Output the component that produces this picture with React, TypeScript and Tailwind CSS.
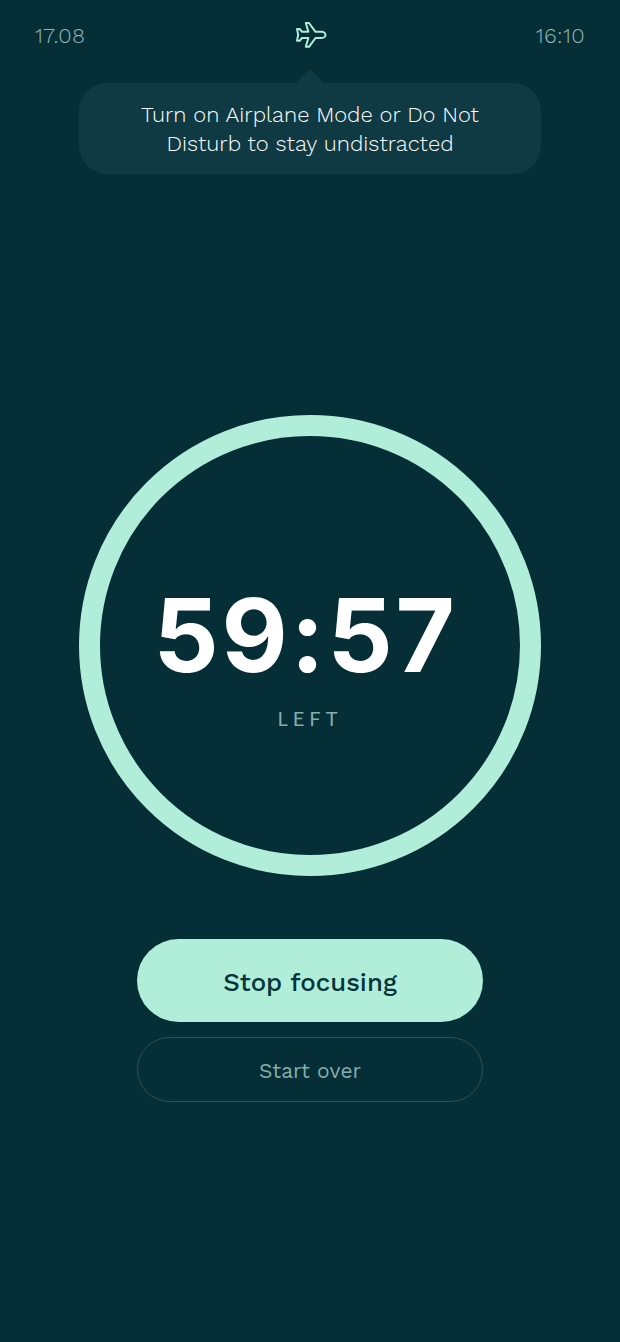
import React from 'react';

function PlaneIcon() {
  return (
    <svg className="ml-[1px]" width="32" height="28" viewBox="0 0 32 28" fill="none" stroke="#b0eeda" strokeWidth="2" strokeLinejoin="round" strokeLinecap="round">
      <path d="M26.500 10.800c2.300 0 4 1.400 4 3.100s-1.700 3.100-4 3.100H20.500l-6.500 8.800h-3.200l2.600-8.800H7l-2.300 2.800H2l1.200-5.900L2 8h2.700L7 10.800h6.400L10.800 2H14l6.500 8.800z" />
    </svg>
  );
}

export default function App() {
  return (
    <div className="h-[1342px] w-[620px] overflow-hidden bg-[#062e37] font-['Work_Sans',sans-serif]">
      <header className="flex h-[69px] items-start justify-between px-[35px] pt-[21px]">
        <span className="mt-[3px] text-[22px] leading-[24px] font-light tracking-[0.02em] text-[#8fb5b4]">17.08</span>
        <PlaneIcon />
        <span className="mt-[3px] text-[22px] leading-[24px] font-light tracking-[0.02em] text-[#8fb5b4]">16:10</span>
      </header>

      <div className="flex flex-col items-center">
        <div className="h-0 w-0 border-x-[14px] border-b-[14px] border-x-transparent border-b-[#103a43]" />
        <div className="flex h-[91px] w-[462px] items-center justify-center rounded-[28px] bg-[#103a43] px-4 text-center text-[22px] leading-[29px] font-light text-white">
          Turn on Airplane Mode or Do Not
          <br />
          Disturb to stay undistracted
        </div>
      </div>

      <div className="mt-[241px] flex justify-center">
        <div className="flex h-[461px] w-[462px] flex-col items-center justify-center rounded-full border-[21px] border-[#b0eeda]">
          <div className="mt-[24px] mr-[9px] font-['Inter',sans-serif] text-[102px] leading-[110px] font-bold tracking-[2.800px] text-white">59:57</div>
          <div className="mt-[16px] font-['Lato',sans-serif] text-[20px] leading-[24px] tracking-[0.25em] text-[#86adad]">LEFT</div>
          <div className="h-[5px]" />
        </div>
      </div>

      <div className="mt-[63px] flex flex-col items-center gap-[15px]">
        <button className="h-[83px] w-[346px] rounded-full bg-[#b0eeda] pt-[3px] text-[25.800px] font-medium text-[#06343b]">Stop focusing</button>
        <button className="h-[65px] w-[346px] rounded-full border border-[#2c5058] pt-[2px] text-[21px] text-[#86adad]">Start over</button>
      </div>
    </div>
  );
}
